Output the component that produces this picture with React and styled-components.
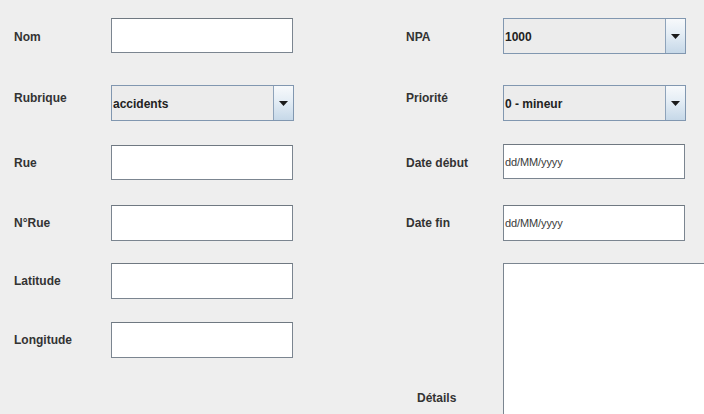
import React from "react";
import styled, { createGlobalStyle } from "styled-components";

const GlobalStyle = createGlobalStyle`
  html, body {
    margin: 0;
    padding: 0;
    background: #eeeeee;
    overflow: hidden;
  }
  body {
    font-family: "Liberation Sans", Arial, sans-serif;
  }
`;

const Form = styled.div`
  width: 704px;
  height: 414px;
  box-sizing: border-box;
  padding: 18px 0 0 14px;
  display: grid;
  grid-template-columns: 97px 182px 113px 97px 1fr;
  grid-template-rows: 67px 60px 60px 58px 59px 92px;
  overflow: hidden;
  background: #eeeeee;
`;

const Label = styled.div`
  grid-column: ${(p) => p.$col};
  align-self: start;
  height: 36px;
  display: flex;
  align-items: center;
  margin-top: ${(p) => p.$shift || 0}px;
  font-size: 12px;
  font-weight: bold;
  line-height: 14px;
  color: #333333;
  white-space: nowrap;
`;

const BottomLabel = styled.div`
  grid-column: 4;
  grid-row: 5 / span 2;
  align-self: end;
  margin: 0 0 9px 11px;
  font-size: 12px;
  font-weight: bold;
  line-height: 14px;
  color: #333333;
`;

const TextField = styled.div`
  grid-column: ${(p) => p.$col};
  align-self: start;
  box-sizing: border-box;
  width: 182px;
  height: ${(p) => p.$h || 35}px;
  margin-top: ${(p) => p.$shift || 0}px;
  background: #ffffff;
  border: 1px solid #7b8590;
  border-top-color: #6f7881;
  display: flex;
  align-items: center;
  padding-left: 1px;
  font-size: 11px;
  color: #3a3a3a;
  letter-spacing: -0.1px;
`;

const TextArea = styled.div`
  grid-column: 5;
  grid-row: 5 / span 2;
  align-self: start;
  width: 220px;
  height: 300px;
  box-sizing: border-box;
  background: #ffffff;
  border: 1px solid #7b8590;
`;

const Combo = styled.div`
  grid-column: ${(p) => p.$col};
  align-self: start;
  box-sizing: border-box;
  width: ${(p) => p.$w || 183}px;
  height: 36px;
  border: 1px solid #8197b0;
  background: #ececec;
  display: flex;
`;

const ComboText = styled.div`
  flex: 1;
  display: flex;
  align-items: center;
  padding: 2px 0 0 1px;
  font-size: 12px;
  font-weight: bold;
  color: #222222;
`;

const ArrowButton = styled.div`
  width: 19px;
  border-left: 1px solid #8ea3ba;
  background: linear-gradient(#f7f9fb 0%, #e4edf5 45%, #c6d8e8 100%);
  display: flex;
  align-items: center;
  justify-content: center;
`;

const Arrow = () => (
  <svg width="9" height="5" viewBox="0 0 9 5">
    <path d="M0 0 H9 L4.5 5 Z" fill="#1a1a1a" />
  </svg>
);

const ComboBox = ({ col, w, value }) => (
  <Combo $col={col} $w={w}>
    <ComboText>{value}</ComboText>
    <ArrowButton>
      <Arrow />
    </ArrowButton>
  </Combo>
);

const App = () => (
  <>
    <GlobalStyle />
    <Form>
      <Label $col={1} $shift={1}>Nom</Label>
      <TextField $col={2} />
      <Label $col={4} $shift={1}>NPA</Label>
      <ComboBox col={5} value="1000" />

      <Label $col={1} $shift={-5}>Rubrique</Label>
      <ComboBox col={2} value="accidents" />
      <Label $col={4} $shift={-5}>Priorité</Label>
      <ComboBox col={5} value="0 - mineur" />

      <Label $col={1}>Rue</Label>
      <TextField $col={2} />
      <Label $col={4}>Date début</Label>
      <TextField $col={5} $shift={-1}>dd/MM/yyyy</TextField>

      <Label $col={1}>N°Rue</Label>
      <TextField $col={2} $h={36} />
      <Label $col={4}>Date fin</Label>
      <TextField $col={5} $h={36}>dd/MM/yyyy</TextField>

      <Label $col={1}>Latitude</Label>
      <TextField $col={2} $h={36} />
      <TextArea />

      <Label $col={1}>Longitude</Label>
      <TextField $col={2} $h={36} />
      <BottomLabel>Détails</BottomLabel>
    </Form>
  </>
);

export default App;
